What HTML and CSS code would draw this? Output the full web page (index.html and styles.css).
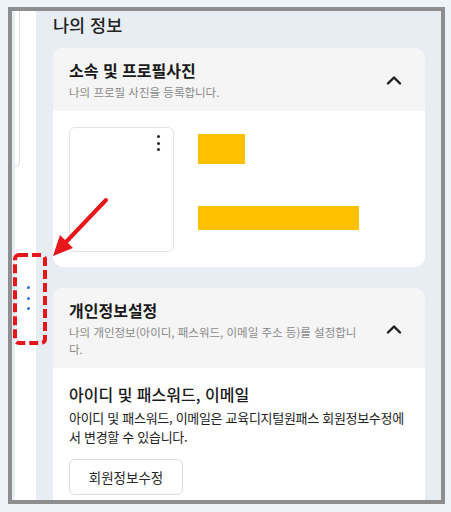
FILE: index.html
```html
<!DOCTYPE html>
<html lang="ko">
<head>
<meta charset="utf-8">
<link rel="stylesheet" href="styles.css">
</head>
<body>
<div class="frame">
  <aside class="side">
    <div class="side-card"></div>
    <div class="handle"><span></span><span></span><span></span></div>
  </aside>
  <main class="main">
    <h1 class="page-title">나의 정보</h1>
    <section class="card">
      <header class="card-head">
        <div class="head-text">
          <h2 class="card-title">소속 및 프로필사진</h2>
          <p class="card-sub">나의 프로필 사진을 등록합니다.</p>
        </div>
        <span class="chevron"><svg width="16" height="10" viewBox="0 0 16 10"><polyline points="2,8.5 8,2.5 14,8.5" fill="none" stroke="#1f1f1f" stroke-width="2.4" stroke-linecap="round" stroke-linejoin="round"/></svg></span>
      </header>
      <div class="card-body profile">
        <div class="photo">
          <span class="kebab"><i></i><i></i><i></i></span>
        </div>
        <div class="info">
          <div class="bar bar-short"></div>
          <div class="bar bar-long"></div>
        </div>
      </div>
    </section>
    <section class="card">
      <header class="card-head">
        <div class="head-text">
          <h2 class="card-title">개인정보설정</h2>
          <p class="card-sub">나의 개인정보(아이디, 패스워드, 이메일 주소 등)를 설정합니다.</p>
        </div>
        <span class="chevron"><svg width="16" height="10" viewBox="0 0 16 10"><polyline points="2,8.5 8,2.5 14,8.5" fill="none" stroke="#1f1f1f" stroke-width="2.4" stroke-linecap="round" stroke-linejoin="round"/></svg></span>
      </header>
      <div class="card-body account">
        <h3 class="sub-title">아이디 및 패스워드, 이메일</h3>
        <p class="desc">아이디 및 패스워드, 이메일은 교육디지털원패스 회원정보수정에서 변경할 수 있습니다.</p>
        <button class="btn">회원정보수정</button>
      </div>
    </section>
  </main>
</div>
<svg class="annot" width="451" height="512" viewBox="0 0 451 512">
  <rect x="15" y="255" width="30" height="88" rx="4" fill="none" stroke="#e8161b" stroke-width="4" stroke-dasharray="9 4"/>
  <line x1="106" y1="200" x2="66" y2="242" stroke="#e8161b" stroke-width="4" stroke-linecap="round"/>
  <polygon points="53,256 73,248 60,235" fill="#e8161b"/>
</svg>
</body>
</html>
```

FILE: styles.css
```css
* { box-sizing: border-box; }
html, body { margin: 0; padding: 0; }
body {
  background: #eef2f9;
  font-family: "Noto Sans CJK KR", "Noto Sans", sans-serif;
  color: #1f1f1f;
  width: 451px;
  height: 512px;
  overflow: hidden;
  position: relative;
}
.frame {
  margin: 7px 0 0 8px;
  width: 437px;
  height: 497px;
  border: 4px solid #8e8e8e;
  display: flex;
  overflow: hidden;
}
.side {
  width: 24px;
  flex: none;
  background: #fff;
  border-left: 3px solid #e8eef8;
  display: flex;
  flex-direction: column;
}
.side-card {
  width: 5px;
  height: 156px;
  border-right: 1px solid #dcdcdc;
  border-bottom: 1px solid #dcdcdc;
  border-bottom-right-radius: 6px;
}
.handle {
  margin: 119px 0 0 12px;
  display: flex;
  flex-direction: column;
  gap: 7.5px;
}
.handle span {
  width: 3px;
  height: 3px;
  border-radius: 50%;
  background: #2f6fdc;
}
.main {
  flex: 1;
  background: #e8edf4;
  padding: 2px 16px 0 17px;
}
.page-title {
  margin: 0 0 11px;
  font-size: 17.5px;
  line-height: 24px;
  font-weight: 500;
  color: #222;
}
.card {
  background: #fff;
  border-radius: 10px;
  overflow: hidden;
  margin-bottom: 21px;
}
.card-head {
  background: #f5f5f5;
  display: flex;
  align-items: center;
  padding: 11px 23px 10px 16px;
  gap: 20px;
}
.head-text { flex: 1; }
.card-title {
  margin: 0;
  font-size: 16px;
  line-height: 22px;
  font-weight: 700;
  color: #1a1a1a;
}
.card-sub {
  margin: 3px 0 0;
  font-size: 11.5px;
  line-height: 17px;
  color: #8a8a8a;
}
.chevron { display: flex; width: 16px; height: 10px; }
.card-body { padding: 16px; }
.profile {
  display: flex;
  gap: 24px;
  padding-bottom: 15px;
}
.photo {
  width: 105px;
  height: 125px;
  border: 1px solid #e4e4e4;
  border-radius: 6px;
  position: relative;
}
.kebab {
  position: absolute;
  top: 7px;
  right: 13px;
  display: flex;
  flex-direction: column;
  gap: 3.5px;
}
.kebab i {
  width: 3px;
  height: 3px;
  border-radius: 50%;
  background: #2a2a2a;
}
.info {
  display: flex;
  flex-direction: column;
  padding-top: 7px;
  gap: 42px;
}
.bar { background: #ffc000; }
.bar-short { width: 47px; height: 30px; }
.bar-long { width: 161px; height: 24px; }
.account { padding-top: 15px; }
.sub-title {
  margin: 0;
  font-size: 16px;
  line-height: 22px;
  font-weight: 500;
  color: #1a1a1a;
}
.desc {
  margin: 3px 0 0;
  font-size: 13px;
  line-height: 19px;
  letter-spacing: -0.3px;
  color: #222;
}
.btn {
  margin-top: 13px;
  width: 114px;
  height: 36px;
  background: #fff;
  border: 1px solid #dcdcdc;
  border-radius: 6px;
  font-family: inherit;
  font-size: 13.5px;
  color: #2a2a2a;
}
.annot {
  position: absolute;
  left: 0;
  top: 0;
  pointer-events: none;
}
```
